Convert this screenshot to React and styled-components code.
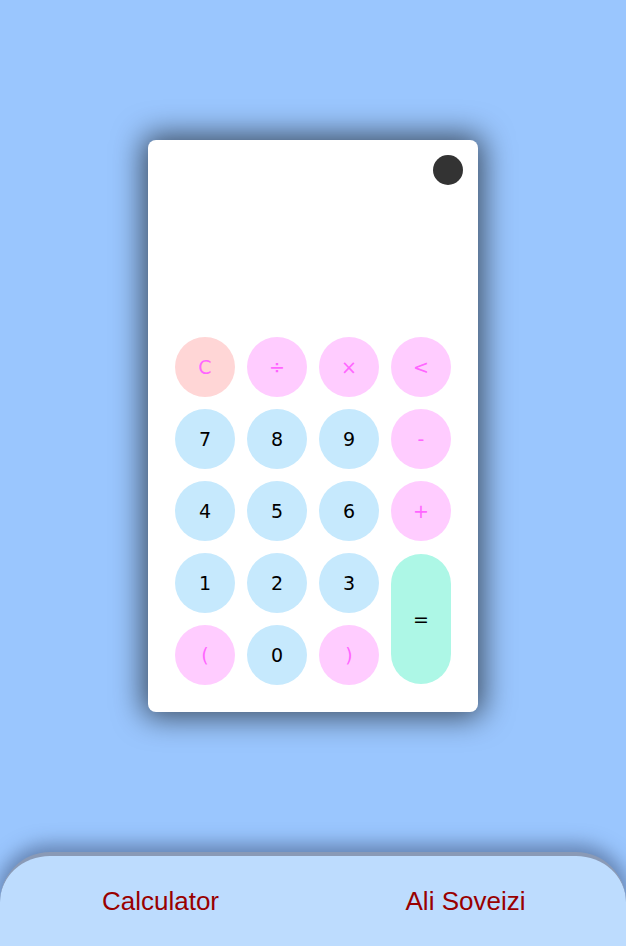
import React from "react";
import styled, { createGlobalStyle } from "styled-components";

const Global = createGlobalStyle`
  html, body { margin: 0; padding: 0; }
  body {
    background: #9ac6fe;
    font-family: "DejaVu Sans", Verdana, sans-serif;
  }
  #root { min-height: 100vh; display: flex; flex-direction: column; }
`;

const Main = styled.main`
  flex: 1;
  display: flex;
  align-items: center;
  justify-content: center;
`;

const Card = styled.div`
  width: 330px;
  height: 572px;
  box-sizing: border-box;
  background: #fff;
  border-radius: 8px;
  box-shadow: 0 0 30px 5px rgba(0, 0, 0, 0.62);
  display: flex;
  flex-direction: column;
  padding: 15px 15px 27px 27px;
`;

const TopBar = styled.div`
  display: flex;
  justify-content: flex-end;
  height: 182px;
`;

const Toggle = styled.button`
  width: 30px;
  height: 30px;
  border-radius: 50%;
  border: none;
  background: #333;
  padding: 0;
`;

const Pad = styled.div`
  display: grid;
  grid-template-columns: repeat(4, 60px);
  grid-auto-rows: 60px;
  gap: 12px;
`;

const palette = {
  clear: { bg: "#ffd6d6", fg: "#ff66ff" },
  op: { bg: "#ffccff", fg: "#ff66ff" },
  num: { bg: "#c6e9fd", fg: "#000" },
  eq: { bg: "#adf7e6", fg: "#000" },
};

const Key = styled.button`
  border: none;
  padding: 0;
  border-radius: 30px;
  font-family: "DejaVu Sans", Verdana, sans-serif;
  font-size: 19px;
  background: ${(p) => palette[p.$kind].bg};
  color: ${(p) => palette[p.$kind].fg};
  grid-row: ${(p) => (p.$tall ? "span 2" : "auto")};
  align-self: center;
  height: ${(p) => (p.$tall ? "130px" : "60px")};
`;

const Footer = styled.footer`
  height: 94px;
  box-sizing: border-box;
  background: #bddcfe;
  border-top: 4px solid #8a9ab6;
  border-radius: 50px 50px 0 0;
  box-shadow: 0 -4px 18px 4px rgba(50, 70, 110, 0.5);
  display: grid;
  grid-template-columns: 1fr 1fr;
  align-items: center;
  padding: 0 8px;
`;

const FootText = styled.div`
  text-align: center;
  font-family: "Liberation Sans", Arial, sans-serif;
  font-size: 26px;
  color: #990000;
`;

const keys = [
  ["C", "clear"], ["÷", "op"], ["×", "op"], ["<", "op"],
  ["7", "num"], ["8", "num"], ["9", "num"], ["-", "op"],
  ["4", "num"], ["5", "num"], ["6", "num"], ["+", "op"],
  ["1", "num"], ["2", "num"], ["3", "num"], ["=", "eq", true],
  ["(", "op"], ["0", "num"], [")", "op"],
];

export default function App() {
  return (
    <>
      <Global />
      <Main>
        <Card>
          <TopBar>
            <Toggle aria-label="theme" />
          </TopBar>
          <Pad>
            {keys.map(([label, kind, tall]) => (
              <Key key={label} $kind={kind} $tall={tall}>
                {label}
              </Key>
            ))}
          </Pad>
        </Card>
      </Main>
      <Footer>
        <FootText>Calculator</FootText>
        <FootText>Ali Soveizi</FootText>
      </Footer>
    </>
  );
}
